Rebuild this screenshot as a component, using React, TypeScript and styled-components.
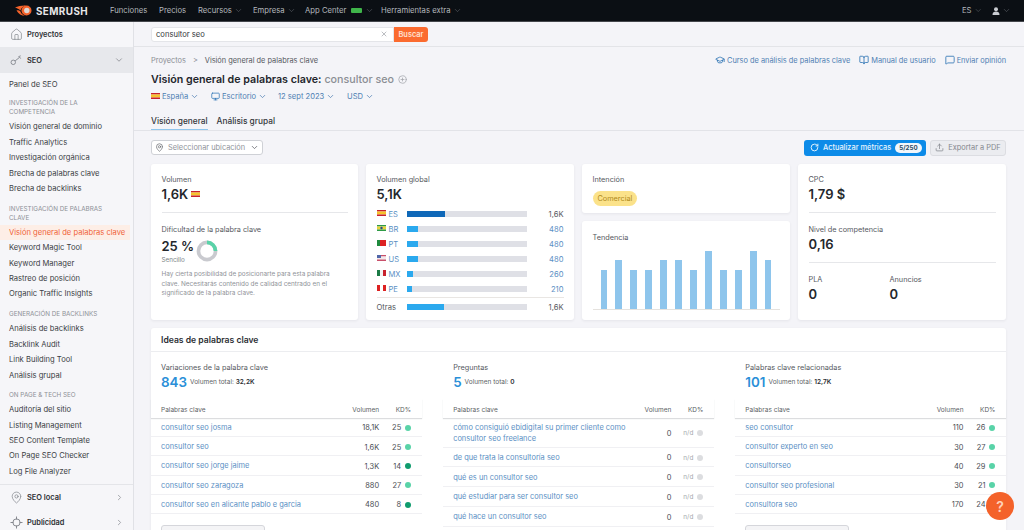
import React from "react";
import styled, { createGlobalStyle } from "styled-components";
import {
  BookOpen,
  ChevronDown,
  ChevronRight,
  CirclePlus,
  GraduationCap,
  House,
  MapPin,
  MessageSquare,
  Monitor,
  RotateCw,
  Upload,
  X,
} from "lucide-react";

const GlobalStyle = createGlobalStyle`
  html, body { margin: 0; padding: 0; height: 530px; overflow: hidden; }
  body { font-family: Inter, "Liberation Sans", sans-serif; background: #f4f4f8; color: #2b2e33; }
  * { box-sizing: border-box; }
`;

const Page = styled.div`
  width: 1024px;
  height: 530px;
  overflow: hidden;
  display: flex;
  flex-direction: column;
  position: relative;
`;

/* top bar */
const TopBar = styled.header`
  height: 22px;
  flex: none;
  background: #0b0f14;
  border-bottom: 1px solid #44474c;
  display: flex;
  align-items: center;
  padding: 0 12px 0 15px;
  color: #b4b7bc;
  font-size: 7.7px;
`;

const Logo = styled.div`
  display: flex;
  align-items: center;
  gap: 4px;
  width: 95px;
  color: #e8e8ea;
  font-size: 9.9px;
  font-weight: 700;
  letter-spacing: 0.4px;
`;

const NavItem = styled.span<{ $w: number }>`
  display: flex;
  align-items: center;
  gap: 2px;
  width: ${(p) => p.$w}px;
  white-space: nowrap;
  svg { color: #777b82; }
`;

const NewTag = styled.span`
  width: 11px;
  height: 5px;
  background: #3fb54a;
  border-radius: 1px;
  margin: 0 1px 0 3px;
`;

const TopRight = styled.div`
  margin-left: auto;
  display: flex;
  align-items: center;
  gap: 10px;
`;

const Body = styled.div`
  flex: 1;
  display: flex;
  min-height: 0;
`;

/* sidebar */
const Sidebar = styled.aside`
  width: 134px;
  flex: none;
  background: #f6f6f9;
  border-right: 1px solid #e0e1e6;
  display: flex;
  flex-direction: column;
  font-size: 7.6px;
  color: #33363b;
`;

const SideTop = styled.div<{ $active?: boolean; $h: number }>`
  height: ${(p) => p.$h}px;
  flex: none;
  display: flex;
  align-items: center;
  gap: 4px;
  padding: 0 9px 0 10px;
  font-size: 7.4px;
  font-weight: 600;
  background: ${(p) => (p.$active ? "#e7e8ec" : "transparent")};
  color: #2f3237;
  svg:first-child { color: #777b82; width: 13px; }
  svg:last-child:not(:first-child) { margin-left: auto; color: #8b8e94; }
`;

const SideScroll = styled.div`
  flex: none;
  height: 412px;
  padding-top: 4px;
  border-bottom: 1px solid #e4e5e9;
`;

const SideHeading = styled.div<{ $top: number }>`
  margin-top: ${(p) => p.$top}px;
  padding: 0 9px;
  font-size: 6.3px;
  line-height: 9px;
  color: #8d9096;
  text-transform: uppercase;
  margin-bottom: 2px;
`;

const SideItem = styled.div<{ $active?: boolean }>`
  height: 15.45px;
  line-height: 15.45px;
  padding: 0 9px;
  margin-right: 3px;
  white-space: nowrap;
  color: ${(p) => (p.$active ? "#f0643a" : "#3b3e44")};
  background: ${(p) => (p.$active ? "#fdeee6" : "transparent")};
`;

/* main column */
const Main = styled.main`
  flex: 1;
  min-width: 0;
  display: flex;
  flex-direction: column;
`;

const SearchBar = styled.div`
  height: 25px;
  flex: none;
  display: flex;
  align-items: center;
  padding-left: 17px;
  border-bottom: 1px solid #e3e4e8;
`;

const SearchInput = styled.div`
  width: 243px;
  height: 15px;
  background: #fff;
  border: 1px solid #e4e5e9;
  border-radius: 3px 0 0 3px;
  display: flex;
  align-items: center;
  justify-content: space-between;
  padding: 0 5px 0 4px;
  font-size: 7.6px;
  color: #33363b;
  svg { color: #9a9da3; }
`;

const SearchButton = styled.div`
  width: 34px;
  height: 15px;
  background: #fb6b2f;
  color: #ffe1d2;
  font-size: 7.4px;
  font-weight: 600;
  border-radius: 0 3px 3px 0;
  display: flex;
  align-items: center;
  justify-content: center;
`;

const Head = styled.div`
  height: 84px;
  flex: none;
  padding: 7px 18px 0 17px;
  border-bottom: 1px solid #e2e3e8;
  display: flex;
  flex-direction: column;
`;

const HeadTop = styled.div`
  display: flex;
  justify-content: space-between;
  align-items: center;
  height: 13px;
  font-size: 7.4px;
  color: #55585e;
`;

const Crumbs = styled.div`
  display: flex;
  gap: 7px;
  span:first-child, span:nth-child(2) { color: #8b8e94; }
`;

const HelpLinks = styled.div`
  display: flex;
  gap: 9px;
  color: #4f7fb3;
  font-size: 7.4px;
`;

const HelpLink = styled.span`
  display: flex;
  align-items: center;
  gap: 2px;
  svg { color: #2f75b5; }
`;

const Title = styled.h1`
  margin: 4px 0 0;
  height: 18px;
  line-height: 18px;
  font-size: 10.7px;
  font-weight: 600;
  color: #23262b;
  display: flex;
  align-items: center;
  gap: 3px;
  span { color: #8b8e94; font-weight: 500; }
  svg { color: #a3a6ab; margin-left: 1px; }
`;

const Selectors = styled.div`
  display: flex;
  margin-top: 1px;
  height: 14px;
  font-size: 7.6px;
  color: #4f7fb3;
`;

const Selector = styled.span<{ $w: number }>`
  display: flex;
  align-items: center;
  gap: 2px;
  width: ${(p) => p.$w}px;
  white-space: nowrap;
`;

const Tabs = styled.div`
  margin-top: 9px;
  display: flex;
  gap: 9px;
  font-size: 8.3px;
  font-weight: 500;
  color: #33363b;
`;

const Tab = styled.span<{ $active?: boolean }>`
  height: 18px;
  line-height: 18px;
  border-bottom: 1px solid ${(p) => (p.$active ? "#8ec5ec" : "transparent")};
`;

const Content = styled.div`
  padding: 8px 18px 0 17px;
  display: flex;
  flex-direction: column;
`;

const Toolbar = styled.div`
  display: flex;
  justify-content: space-between;
  align-items: center;
  height: 17px;
  margin-bottom: 8px;
`;

const LocationSelect = styled.div`
  width: 112px;
  height: 15px;
  background: #fff;
  border: 1px solid #cfd1d6;
  border-radius: 3px;
  display: flex;
  align-items: center;
  gap: 4px;
  padding: 0 3px;
  font-size: 7.4px;
  white-space: nowrap;
  color: #90939a;
  svg:first-child { color: #6d7076; }
  svg:last-child { margin-left: auto; color: #5b5e64; }
`;

const Actions = styled.div`
  display: flex;
  gap: 4px;
`;

const UpdateButton = styled.div`
  width: 122px;
  height: 16px;
  background: #0d8be8;
  color: #e8f4fd;
  border-radius: 3px;
  display: flex;
  align-items: center;
  padding: 0 5px 0 6px;
  gap: 4px;
  font-size: 7.4px;
  font-weight: 500;
  white-space: nowrap;
  svg { flex: none; }
`;

const Quota = styled.span`
  margin-left: auto;
  background: #f1f6fb;
  color: #2e4a63;
  font-size: 6.2px;
  font-weight: 700;
  height: 10px;
  line-height: 10px;
  padding: 0 4px;
  border-radius: 5px;
`;

const ExportButton = styled.div`
  width: 76px;
  height: 16px;
  background: #ebecf0;
  border: 1px solid #dcdde2;
  color: #84878d;
  border-radius: 3px;
  display: flex;
  align-items: center;
  justify-content: center;
  gap: 4px;
  font-size: 7.4px;
  white-space: nowrap;
`;

/* metric cards */
const Grid = styled.div`
  display: grid;
  grid-template-columns: 207px 208px 208px 208px;
  gap: 8px;
  height: 156px;
`;

const Card = styled.section`
  background: #fff;
  border-radius: 3px;
  box-shadow: 0 1px 3px rgba(40, 45, 60, 0.07);
  padding: 9.5px 10.5px 0;
  min-height: 0;
`;

const Stack = styled.div`
  display: flex;
  flex-direction: column;
  gap: 8px;
  min-height: 0;
`;

const Label = styled.div`
  font-size: 7.3px;
  line-height: 11px;
  color: #55585e;
`;

const Big = styled.div`
  margin-top: 1px;
  font-size: 13px;
  line-height: 16px;
  font-weight: 600;
  color: #24272c;
  display: flex;
  align-items: center;
  gap: 3px;
`;

const Rule = styled.div`
  height: 1px;
  background: #e6e7ea;
  margin: 10.5px 0;
`;

const DifficultyRow = styled.div`
  display: flex;
  align-items: center;
  gap: 2px;
  margin-top: 2.5px;
`;

const SmallNote = styled.div`
  margin-top: 1.5px;
  font-size: 6.3px;
  line-height: 9px;
  color: #7c7f85;
`;

const Explain = styled.p`
  margin: 5.5px 0 0;
  font-size: 6.4px;
  line-height: 9.6px;
  color: #8f9298;
`;

const CountryRows = styled.div`
  margin-top: 5px;
`;

const CountryRow = styled.div`
  display: grid;
  grid-template-columns: 30px 120px 1fr;
  align-items: center;
  height: 15px;
  font-size: 7.6px;
`;

const CountryCode = styled.span<{ $plain?: boolean }>`
  display: flex;
  align-items: center;
  gap: 3px;
  color: ${(p) => (p.$plain ? "#55585e" : "#5b8fc4")};
  svg { margin-top: -2px; }
`;

const BarTrack = styled.div`
  height: 6.5px;
  background: #dfe0e6;
`;

const BarFill = styled.div<{ $dark?: boolean }>`
  height: 100%;
  background: ${(p) => (p.$dark ? "#0f68b8" : "#2ba9ee")};
`;

const CountryValue = styled.span<{ $plain?: boolean }>`
  text-align: right;
  color: ${(p) => (p.$plain ? "#55585e" : "#5b8fc4")};
`;

const CountryDivider = styled.div`
  height: 1px;
  background: #e9e6e3;
  margin: 0 0 2px;
`;

const Badge = styled.span`
  display: inline-block;
  margin-top: 2px;
  height: 15px;
  line-height: 15px;
  padding: 0 5px;
  background: #fbe28a;
  color: #b08a1c;
  border-radius: 8px;
  font-size: 7.3px;
`;

const IntentCard = styled(Card)`
  height: 49px;
  flex: none;
`;

const TrendCard = styled(Card)`
  height: 99px;
  flex: none;
  padding-top: 10.5px;
`;

const Chart = styled.div`
  height: 60px;
  margin-top: 7px;
  border-bottom: 1px solid #e5e2de;
  display: flex;
  align-items: flex-end;
  justify-content: space-between;
  padding: 0 8px;
`;

const ChartBar = styled.div<{ $h: number }>`
  width: 6.5px;
  height: ${(p) => p.$h}px;
  background: #8ec5ec;
`;

const TwoCol = styled.div`
  display: grid;
  grid-template-columns: 81px 1fr;
`;

/* ideas */
const Ideas = styled.section`
  margin-top: 8px;
  background: #fff;
  border-radius: 3px;
  box-shadow: 0 1px 3px rgba(40, 45, 60, 0.07);
  height: 260px;
`;

const IdeasTitle = styled.h2`
  margin: 0;
  height: 24px;
  line-height: 24px;
  padding: 0 10px;
  font-size: 8.6px;
  font-weight: 600;
  color: #2b2e33;
  border-bottom: 1px solid #ecedf0;
`;

const IdeasGrid = styled.div`
  display: grid;
  grid-template-columns: 1fr 1fr 1fr;
  column-gap: 21.5px;
`;

const IdeaCol = styled.div`
  padding-top: 10px;
`;

const IdeaHead = styled.div`
  padding: 0 10px;
  height: 37px;
`;

const IdeaSummary = styled.div`
  display: flex;
  align-items: center;
  gap: 3px;
  font-size: 6.5px;
  color: #5c5f65;
  margin-top: 1px;
  b { color: #2b2e33; font-weight: 600; }
`;

const IdeaCount = styled.span`
  font-size: 13.4px;
  line-height: 16px;
  font-weight: 600;
  color: #2a8fd8;
`;

const Columns = styled.div`
  display: grid;
  grid-template-columns: 1fr 44px 32px;
  align-items: center;
  height: 19px;
  padding: 2px 10.5px 0 10px;
  font-size: 6.5px;
  color: #5c5f65;
  box-shadow: 0 1px 1px rgba(60, 65, 80, 0.18);
`;

const AlignEnd = styled.span`
  text-align: right;
`;

const Row = styled.div<{ $h: number }>`
  display: grid;
  grid-template-columns: 1fr 44px 32px;
  align-items: center;
  height: ${(p) => p.$h}px;
  padding: 1.5px 10.5px 0 10px;
  border-bottom: 1px solid #f0f0f3;
  font-size: 7.45px;
  color: #4a4d53;
`;

const KeywordLink = styled.span`
  color: #5b8fc4;
  line-height: 11.5px;
`;

const Kd = styled.span<{ $empty?: boolean }>`
  display: flex;
  justify-content: flex-end;
  align-items: center;
  gap: 4px;
  color: ${(p) => (p.$empty ? "#a5a8ad" : "#4a4d53")};
  font-size: ${(p) => (p.$empty ? "6.4px" : "7.45px")};
`;

const Dot = styled.span<{ $c: string }>`
  width: 6px;
  height: 6px;
  border-radius: 50%;
  background: ${(p) => p.$c};
`;

const MoreButton = styled.div`
  margin: 11px 0 0 10px;
  width: 104px;
  height: 16px;
  border: 1px solid #d5d6db;
  border-radius: 3px;
  background: #f4f4f6;
`;

const HelpFab = styled.div`
  position: absolute;
  left: 986px;
  top: 492px;
  width: 28px;
  height: 28px;
  border-radius: 50%;
  background: #f4622a;
  color: #ffd2bb;
  font-size: 14px;
  font-weight: 600;
  display: flex;
  align-items: center;
  justify-content: center;
`;

const flags: Record<string, string[]> = {
  ES: ["#c8202c", "#f6c32c", "#c8202c"],
  PE: ["#d22", "#fff", "#d22"],
  MX: ["#1b7a46", "#f2f2f2", "#c8202c"],
  BR: ["#2e9b46", "#e8d33a", "#2e9b46"],
  PT: ["#1f8a3e", "#d22", "#d22"],
  US: ["#c9506a", "#f2e8ea", "#5066a8"],
};

// tiny flag drawn as stripes, vertical for the ones that need it
const Flag = ({ code }: { code: string }) => {
  const [a, b, c] = flags[code];
  const vertical = code === "PE" || code === "MX" || code === "PT";
  return (
    <svg width="9" height="6" viewBox="0 0 9 6" style={{ flex: "none" }}>
      {vertical ? (
        <>
          <rect width="3" height="6" fill={a} />
          <rect x="3" width="3" height="6" fill={b} />
          <rect x="6" width="3" height="6" fill={c} />
        </>
      ) : (
        <>
          <rect width="9" height="1.5" fill={a} />
          <rect y="1.5" width="9" height="3" fill={b} />
          <rect y="4.5" width="9" height="1.5" fill={a === "#c9506a" ? a : c} />
        </>
      )}
      {code === "BR" && <circle cx="4.5" cy="3" r="1.2" fill="#234a8c" />}
      {code === "US" && <rect width="4" height="3" fill={c} />}
    </svg>
  );
};

const SemrushMark = () => (
  <svg width="17" height="11" viewBox="0 0 17 11">
    <path d="M0 2.500C3 1 7 0.300 11 0.500 8 1.500 6 3 5.500 5.500 4 4 2 3 0 2.500z" fill="#f4622a" />
    <path d="M1.500 5.500C3 5 4.500 5.500 5.500 6.500 6 8.500 7.500 10 10 10.800 6.500 10.800 3.500 9 1.500 5.500z" fill="#f4622a" />
    <circle cx="11.500" cy="5.500" r="5" fill="#f4622a" />
    <circle cx="11.800" cy="5.500" r="2.700" fill="#ddd6d2" />
  </svg>
);

const KeyIcon = () => (
  <svg width="13" height="12" viewBox="0 0 14 12" fill="none" stroke="#7b7e85" strokeWidth="0.9">
    <circle cx="3.500" cy="8.500" r="2.400" />
    <path d="M5.500 7l5-4M9 2.500l2.500-1M10.500 3l1 1.500" />
  </svg>
);

const TargetIcon = () => (
  <svg width="13" height="13" viewBox="0 0 13 13" fill="none" stroke="#7b7e85" strokeWidth="0.9">
    <circle cx="6.500" cy="6.500" r="3.600" />
    <path d="M6.500 0.500v3M6.500 9.500v3M0.500 6.500h3M9.500 6.500h3" />
  </svg>
);

const Donut = () => (
  <svg width="22" height="22" viewBox="0 0 36 36">
    <circle cx="18" cy="18" r="14" fill="none" stroke="#c9cacf" strokeWidth="6" />
    <circle
      cx="18"
      cy="18"
      r="14"
      fill="none"
      stroke="#59d3a8"
      strokeWidth="6"
      strokeDasharray="22 88"
      transform="rotate(-90 18 18)"
    />
  </svg>
);

const sideGroups = [
  { heading: ["Investigación de la", "competencia"], top: 7, items: ["Visión general de dominio", "Traffic Analytics", "Investigación orgánica", "Brecha de palabras clave", "Brecha de backlinks"] },
  { heading: ["Investigación de palabras", "clave"], top: 8, items: ["Visión general de palabras clave", "Keyword Magic Tool", "Keyword Manager", "Rastreo de posición", "Organic Traffic Insights"] },
  { heading: ["Generación de backlinks"], top: 8.5, items: ["Análisis de backlinks", "Backlink Audit", "Link Building Tool", "Análisis grupal"] },
  { heading: ["On page & tech SEO"], top: 8, items: ["Auditoría del sitio", "Listing Management", "SEO Content Template", "On Page SEO Checker", "Log File Analyzer"] },
];

const countries = [
  { code: "ES", pct: 32, value: "1,6K", dark: true },
  { code: "BR", pct: 9.500, value: "480" },
  { code: "PT", pct: 9.500, value: "480" },
  { code: "US", pct: 9.500, value: "480" },
  { code: "MX", pct: 5.500, value: "260" },
  { code: "PE", pct: 4.200, value: "210" },
];

const trend = [39, 49, 39, 39, 49, 49, 39, 58, 39, 39, 58, 49];

const GREEN = "#59d3a8";
const DARK_GREEN = "#0f9c6e";
const GREY = "#dcdde0";

type IdeaRow = { kw: string; vol: string; kd: string; c: string; h?: number };

const ideaCols: { title: string; count: string; total: string; rowH: number; more: boolean; rows: IdeaRow[] }[] = [
  {
    title: "Variaciones de la palabra clave",
    count: "843",
    total: "32,2K",
    rowH: 19.2,
    more: true,
    rows: [
      { kw: "consultor seo josma", vol: "18,1K", kd: "25", c: GREEN },
      { kw: "consultor seo", vol: "1,6K", kd: "25", c: GREEN },
      { kw: "consultor seo jorge jaime", vol: "1,3K", kd: "14", c: DARK_GREEN },
      { kw: "consultor seo zaragoza", vol: "880", kd: "27", c: GREEN },
      { kw: "consultor seo en alicante pablo e garcia", vol: "480", kd: "8", c: DARK_GREEN },
    ],
  },
  {
    title: "Preguntas",
    count: "5",
    total: "0",
    rowH: 19.800,
    more: false,
    rows: [
      { kw: "cómo consiguió ebidigital su primer cliente como consultor seo freelance", vol: "0", kd: "n/d", c: GREY, h: 29.500 },
      { kw: "de que trata la consultoría seo", vol: "0", kd: "n/d", c: GREY },
      { kw: "qué es un consultor seo", vol: "0", kd: "n/d", c: GREY },
      { kw: "qué estudiar para ser consultor seo", vol: "0", kd: "n/d", c: GREY },
      { kw: "qué hace un consultor seo", vol: "0", kd: "n/d", c: GREY },
    ],
  },
  {
    title: "Palabras clave relacionadas",
    count: "101",
    total: "12,7K",
    rowH: 19.2,
    more: true,
    rows: [
      { kw: "seo consultor", vol: "110", kd: "26", c: GREEN },
      { kw: "consultor experto en seo", vol: "30", kd: "27", c: GREEN },
      { kw: "consultorseo", vol: "40", kd: "29", c: GREEN },
      { kw: "consultor seo profesional", vol: "30", kd: "21", c: GREEN },
      { kw: "consultora seo", vol: "170", kd: "24", c: GREEN },
    ],
  },
];

export default function App() {
  return (
    <Page>
      <GlobalStyle />
      <TopBar>
        <Logo>
          <SemrushMark />
          SEMRUSH
        </Logo>
        <NavItem $w={49}>Funciones</NavItem>
        <NavItem $w={39}>Precios</NavItem>
        <NavItem $w={55}>Recursos <ChevronDown size={9} strokeWidth={1.2} /></NavItem>
        <NavItem $w={52}>Empresa <ChevronDown size={9} strokeWidth={1.2} /></NavItem>
        <NavItem $w={76}>App Center <NewTag /> <ChevronDown size={9} strokeWidth={1.2} /></NavItem>
        <NavItem $w={90}>Herramientas extra <ChevronDown size={9} strokeWidth={1.2} /></NavItem>
        <TopRight>
          <NavItem $w={20}>ES <ChevronDown size={9} strokeWidth={1.2} /></NavItem>
          <NavItem $w={20}>
            <svg width="8" height="8" viewBox="0 0 8 8" fill="#c9ccd1">
              <circle cx="4" cy="2.200" r="2" />
              <path d="M0.500 8c0-2.400 1.500-3.400 3.500-3.400S7.500 5.600 7.500 8z" />
            </svg>
            <ChevronDown size={9} strokeWidth={1.2} />
          </NavItem>
        </TopRight>
      </TopBar>
      <Body>
        <Sidebar>
          <SideTop $h={25}>
            <House size={13} strokeWidth={1.2} />
            Proyectos
          </SideTop>
          <SideTop $h={26} $active>
            <KeyIcon />
            SEO
            <ChevronDown size={10} />
          </SideTop>
          <SideScroll>
            <SideItem>Panel de SEO</SideItem>
            {sideGroups.map((g) => (
              <div key={g.heading[0]}>
                <SideHeading $top={g.top}>
                  {g.heading.map((l) => (
                    <div key={l}>{l}</div>
                  ))}
                </SideHeading>
                {g.items.map((item) => (
                  <SideItem key={item} $active={item === "Visión general de palabras clave"}>
                    {item}
                  </SideItem>
                ))}
              </div>
            ))}
          </SideScroll>
          <SideTop $h={25}>
            <MapPin size={13} strokeWidth={1.2} />
            SEO local
            <ChevronRight size={9} />
          </SideTop>
          <SideTop $h={25}>
            <TargetIcon />
            Publicidad
            <ChevronRight size={9} />
          </SideTop>
        </Sidebar>
        <Main>
          <SearchBar>
            <SearchInput>
              consultor seo
              <X size={8} />
            </SearchInput>
            <SearchButton>Buscar</SearchButton>
          </SearchBar>
          <Head>
            <HeadTop>
              <Crumbs>
                <span>Proyectos</span>
                <span>&gt;</span>
                <span>Visión general de palabras clave</span>
              </Crumbs>
              <HelpLinks>
                <HelpLink><GraduationCap size={10} />Curso de análisis de palabras clave</HelpLink>
                <HelpLink><BookOpen size={10} />Manual de usuario</HelpLink>
                <HelpLink><MessageSquare size={10} />Enviar opinión</HelpLink>
              </HelpLinks>
            </HeadTop>
            <Title>
              Visión general de palabras clave: <span>consultor seo</span>
              <CirclePlus size={9} />
            </Title>
            <Selectors>
              <Selector $w={60}><Flag code="ES" /> España <ChevronDown size={9} /></Selector>
              <Selector $w={67}><Monitor size={9} color="#2f75b5" /> Escritorio <ChevronDown size={9} /></Selector>
              <Selector $w={69}>12 sept 2023 <ChevronDown size={9} /></Selector>
              <Selector $w={30}>USD <ChevronDown size={9} /></Selector>
            </Selectors>
            <Tabs>
              <Tab $active>Visión general</Tab>
              <Tab>Análisis grupal</Tab>
            </Tabs>
          </Head>
          <Content>
            <Toolbar>
              <LocationSelect>
                <MapPin size={9} />
                Seleccionar ubicación
                <ChevronDown size={9} />
              </LocationSelect>
              <Actions>
                <UpdateButton>
                  <RotateCw size={9} strokeWidth={2.5} />
                  Actualizar métricas
                  <Quota>5/250</Quota>
                </UpdateButton>
                <ExportButton>
                  <Upload size={9} />
                  Exportar a PDF
                </ExportButton>
              </Actions>
            </Toolbar>
            <Grid>
              <Card>
                <Label>Volumen</Label>
                <Big>1,6K <Flag code="ES" /></Big>
                <Rule />
                <Label>Dificultad de la palabra clave</Label>
                <DifficultyRow>
                  <div>
                    <Big>25 %</Big>
                    <SmallNote>Sencillo</SmallNote>
                  </div>
                  <Donut />
                </DifficultyRow>
                <Explain>
                  Hay cierta posibilidad de posicionarte para esta palabra clave. Necesitarás
                  contenido de calidad centrado en el significado de la palabra clave.
                </Explain>
              </Card>
              <Card>
                <Label>Volumen global</Label>
                <Big>5,1K</Big>
                <CountryRows>
                  {countries.map((c) => (
                    <CountryRow key={c.code}>
                      <CountryCode><Flag code={c.code} />{c.code}</CountryCode>
                      <BarTrack>
                        <BarFill $dark={c.dark} style={{ width: `${c.pct}%` }} />
                      </BarTrack>
                      <CountryValue $plain={c.dark}>{c.value}</CountryValue>
                    </CountryRow>
                  ))}
                  <CountryDivider />
                  <CountryRow>
                    <CountryCode $plain>Otras</CountryCode>
                    <BarTrack>
                      <BarFill style={{ width: "31%" }} />
                    </BarTrack>
                    <CountryValue $plain>1,6K</CountryValue>
                  </CountryRow>
                </CountryRows>
              </Card>
              <Stack>
                <IntentCard>
                  <Label>Intención</Label>
                  <Badge>Comercial</Badge>
                </IntentCard>
                <TrendCard>
                  <Label>Tendencia</Label>
                  <Chart>
                    {trend.map((h, i) => (
                      <ChartBar key={i} $h={h} />
                    ))}
                  </Chart>
                </TrendCard>
              </Stack>
              <Card>
                <Label>CPC</Label>
                <Big>1,79 $</Big>
                <Rule />
                <Label>Nivel de competencia</Label>
                <Big>0,16</Big>
                <Rule />
                <TwoCol>
                  <div>
                    <Label>PLA</Label>
                    <Big>0</Big>
                  </div>
                  <div>
                    <Label>Anuncios</Label>
                    <Big>0</Big>
                  </div>
                </TwoCol>
              </Card>
            </Grid>
            <Ideas>
              <IdeasTitle>Ideas de palabras clave</IdeasTitle>
              <IdeasGrid>
                {ideaCols.map((col) => (
                  <IdeaCol key={col.title}>
                    <IdeaHead>
                      <Label>{col.title}</Label>
                      <IdeaSummary>
                        <IdeaCount>{col.count}</IdeaCount>
                        <span>Volumen total: <b>{col.total}</b></span>
                      </IdeaSummary>
                    </IdeaHead>
                    <Columns>
                      <span>Palabras clave</span>
                      <AlignEnd>Volumen</AlignEnd>
                      <AlignEnd>KD%</AlignEnd>
                    </Columns>
                    {col.rows.map((r) => (
                      <Row key={r.kw} $h={r.h ?? col.rowH}>
                        <KeywordLink>{r.kw}</KeywordLink>
                        <AlignEnd>{r.vol}</AlignEnd>
                        <Kd $empty={r.kd === "n/d"}>{r.kd} <Dot $c={r.c} /></Kd>
                      </Row>
                    ))}
                    {col.more && <MoreButton />}
                  </IdeaCol>
                ))}
              </IdeasGrid>
            </Ideas>
          </Content>
        </Main>
      </Body>
      <HelpFab>?</HelpFab>
    </Page>
  );
}
